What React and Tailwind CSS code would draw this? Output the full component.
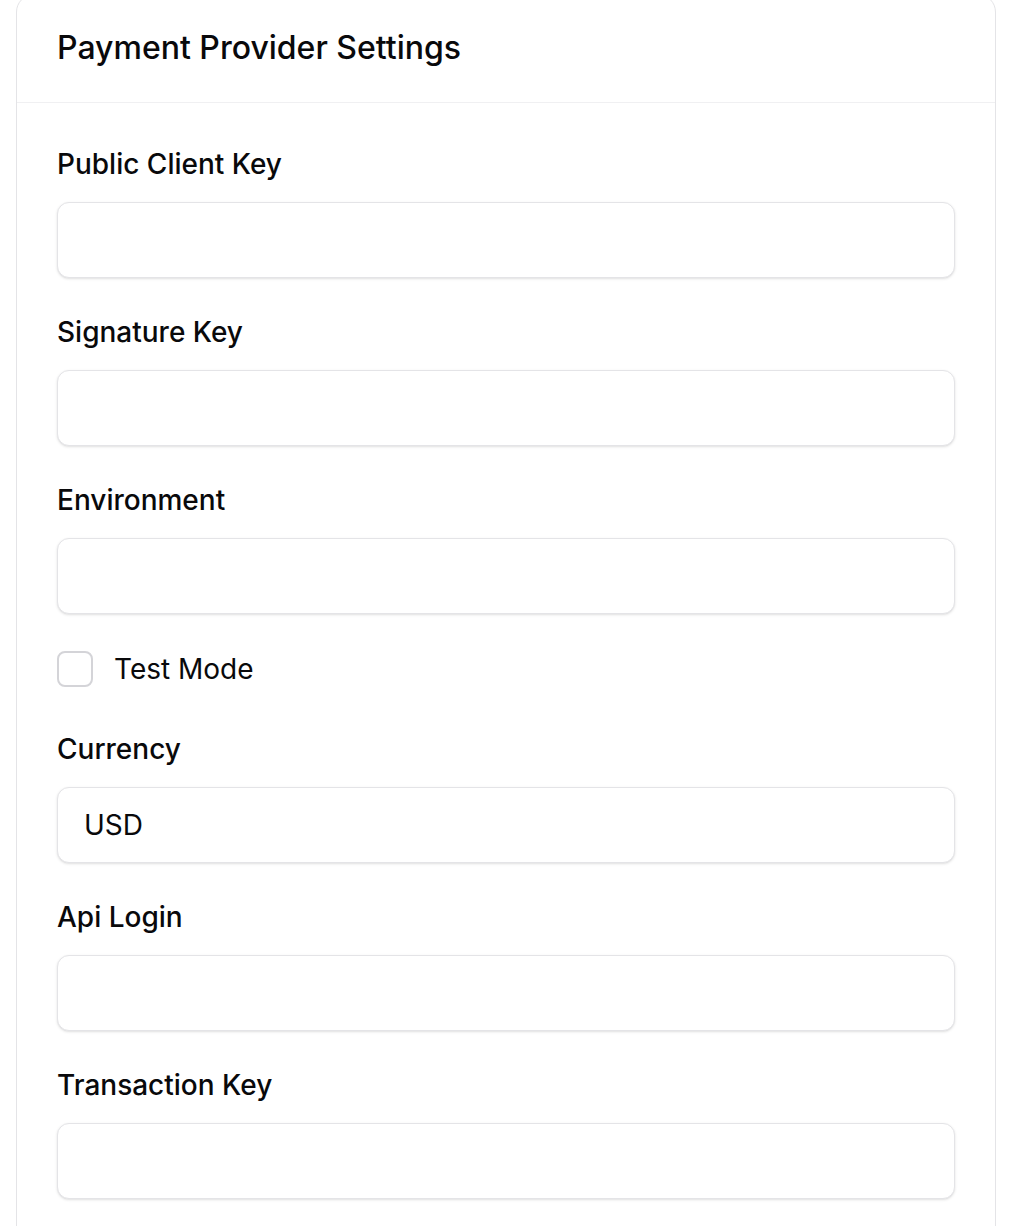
import React, { useState } from "react";

const fields = [
  { id: "publicClientKey", label: "Public Client Key", value: "" },
  { id: "signatureKey", label: "Signature Key", value: "" },
  { id: "environment", label: "Environment", value: "" },
];

const moreFields = [
  { id: "currency", label: "Currency", value: "USD" },
  { id: "apiLogin", label: "Api Login", value: "" },
  { id: "transactionKey", label: "Transaction Key", value: "" },
];

const Field = ({ id, label, value, onChange, className = "" }) => (
  <div className={`flex flex-col ${className}`}>
    <label
      htmlFor={id}
      className="text-[28px] leading-[40px] font-medium text-[#09090b] mb-[18px]"
    >
      {label}
    </label>
    <input
      id={id}
      value={value}
      onChange={(e) => onChange(id, e.target.value)}
      className="h-[76px] w-full rounded-xl border border-[#e4e4e7] bg-white px-[26px] text-[28px] text-[#09090b] shadow-sm outline-none"
    />
  </div>
);

export default function App() {
  const [values, setValues] = useState(() => {
    const v = {};
    [...fields, ...moreFields].forEach((f) => (v[f.id] = f.value));
    return v;
  });
  const [testMode, setTestMode] = useState(false);

  const handleChange = (id, val) => setValues((prev) => ({ ...prev, [id]: val }));

  return (
    <div className="min-h-screen bg-white font-['Inter',sans-serif] text-[#09090b]">
      <div className="ml-4 -mt-[6px] w-[980px] rounded-[18px] border border-[#e4e4e7] bg-white pb-16">
        {/* Header */}
        <div className="border-b border-[#f0f0f2] px-10 pt-[29px] pb-[30px]">
          <h2 className="text-[32px] leading-[48px] font-medium">
            Payment Provider Settings
          </h2>
        </div>

        {/* Form */}
        <div className="flex flex-col px-10 pt-[41px]">
          {fields.map((f, i) => (
            <Field
              key={f.id}
              id={f.id}
              label={f.label}
              value={values[f.id]}
              onChange={handleChange}
              className={i > 0 ? "mt-[34px]" : ""}
            />
          ))}

          <label className="mt-[37px] flex h-[36px] cursor-pointer items-center">
            <input
              type="checkbox"
              checked={testMode}
              onChange={(e) => setTestMode(e.target.checked)}
              className="peer sr-only"
            />
            <span className="h-[36px] w-[36px] rounded-[8px] border-2 border-[#d4d4d8] bg-white" />
            <span className="ml-[21px] text-[28px] leading-[40px]">Test Mode</span>
          </label>

          {moreFields.map((f, i) => (
            <Field
              key={f.id}
              id={f.id}
              label={f.label}
              value={values[f.id]}
              onChange={handleChange}
              className={i > 0 ? "mt-[34px]" : "mt-[42px]"}
            />
          ))}
        </div>
      </div>
    </div>
  );
}
